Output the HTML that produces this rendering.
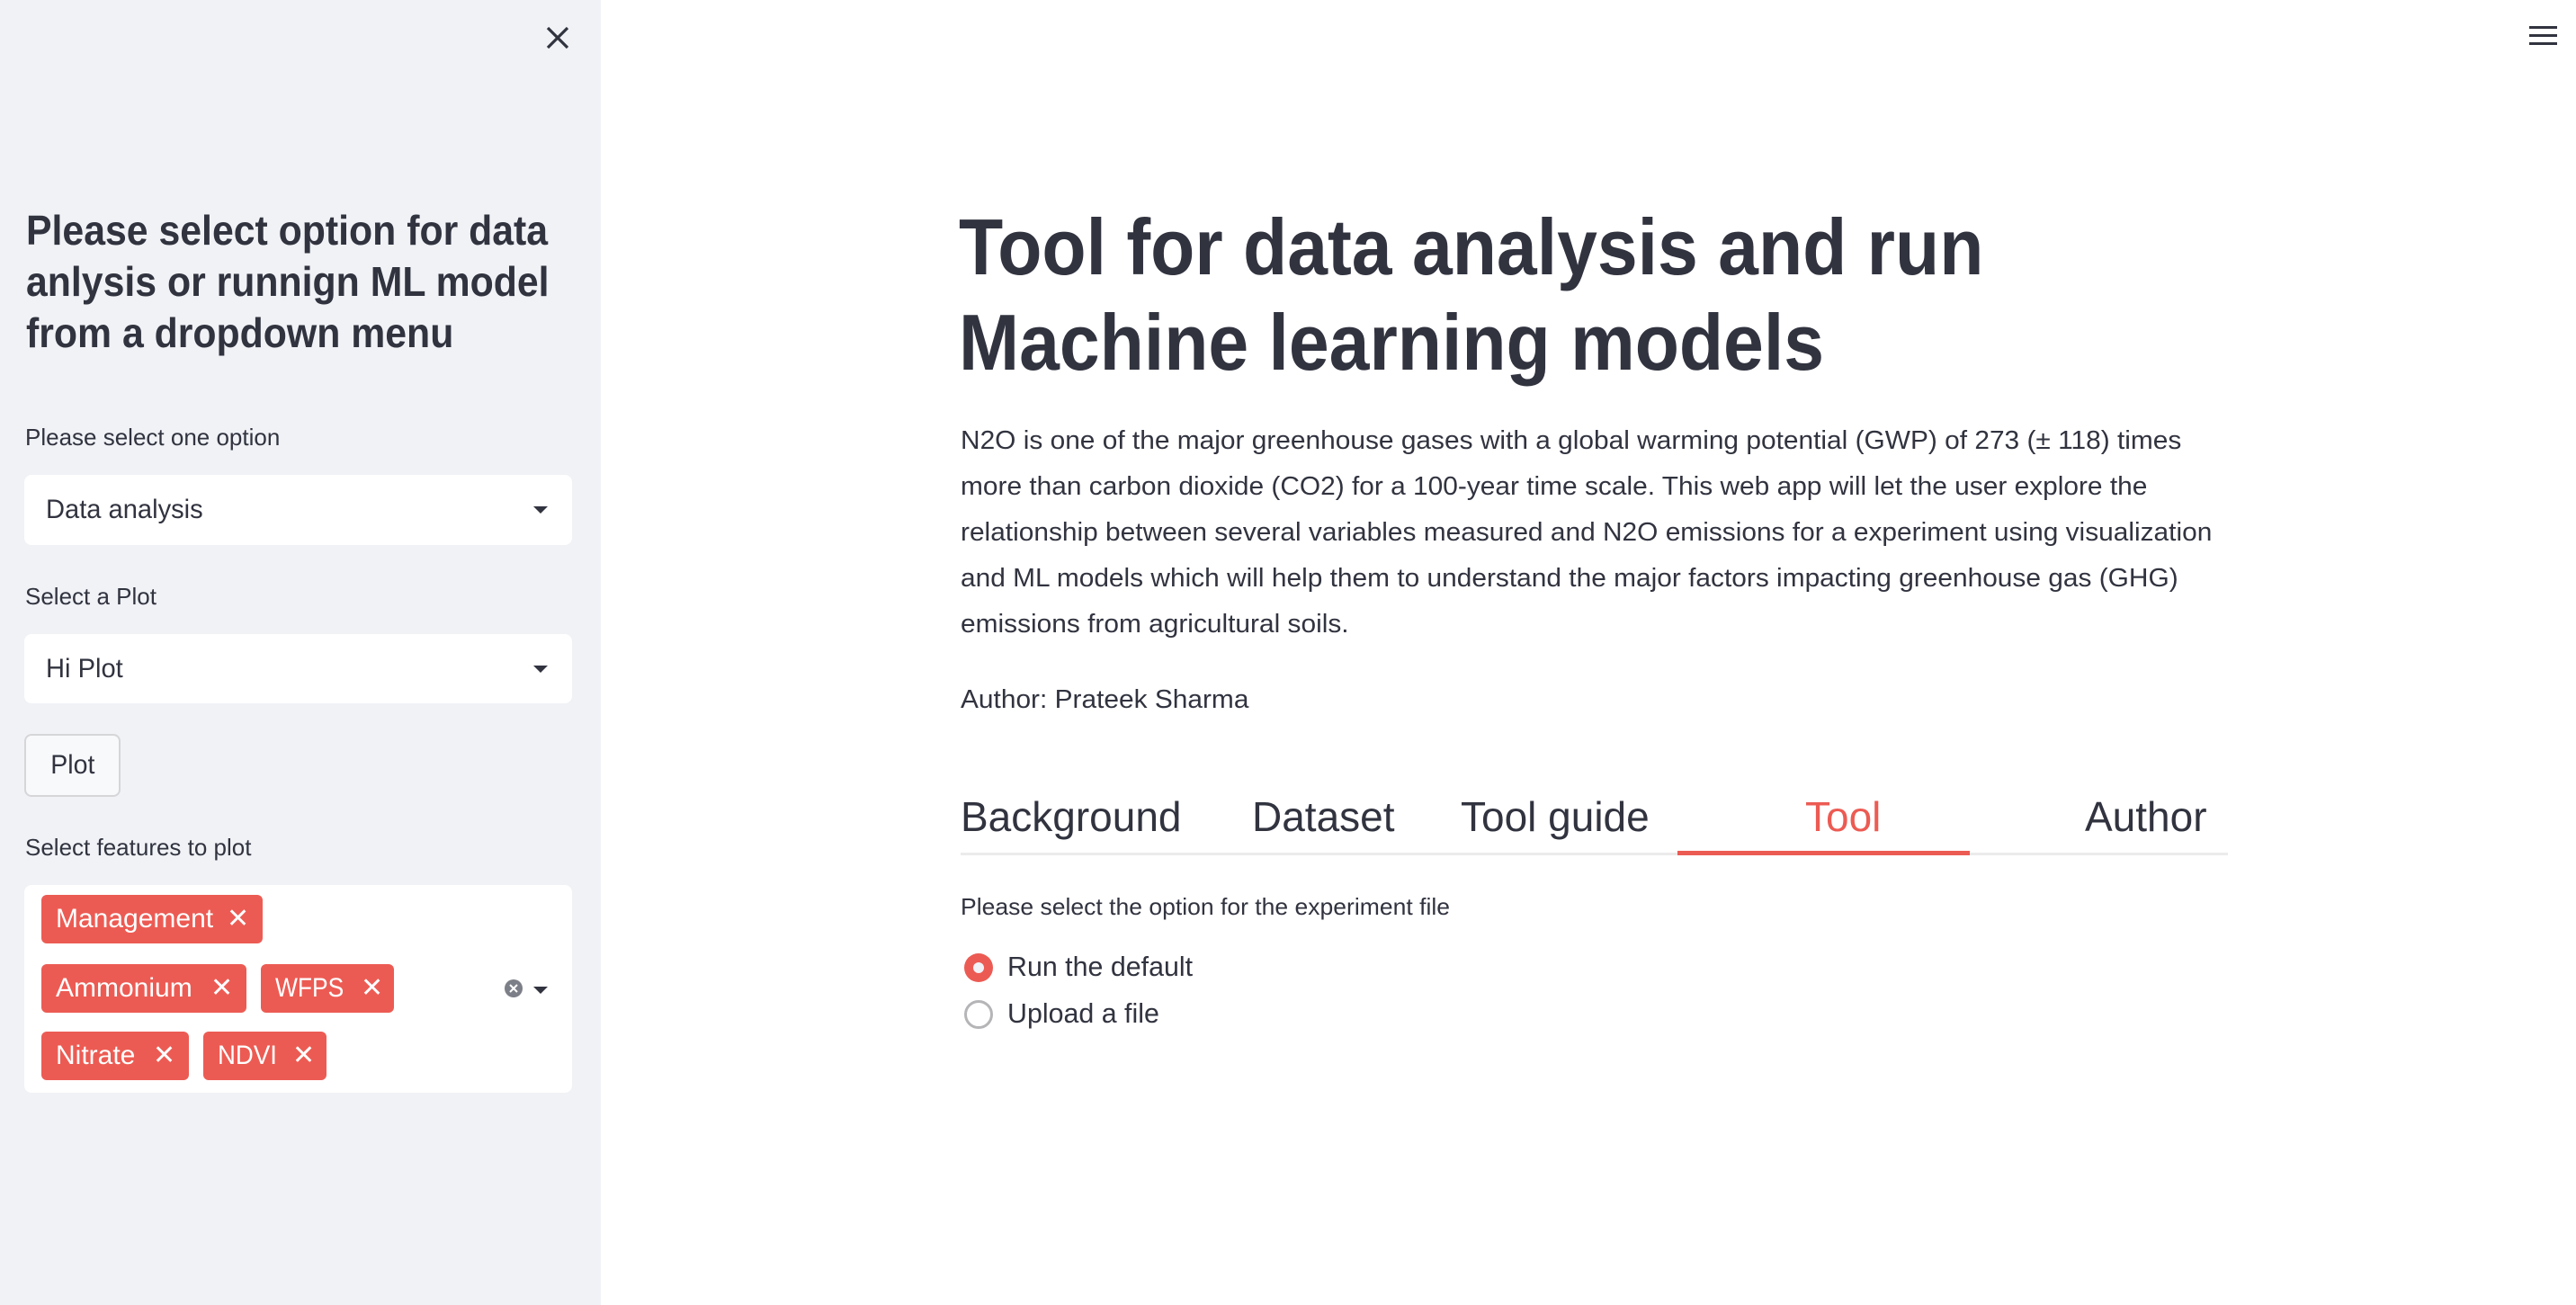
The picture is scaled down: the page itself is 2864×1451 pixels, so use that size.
<!DOCTYPE html>
<html><head><meta charset="utf-8"><style>
*{margin:0;padding:0;box-sizing:border-box}
body{width:2864px;height:1451px;position:relative;background:#fff;font-family:"Liberation Sans",sans-serif;color:#31333f;overflow:hidden}
.a{position:absolute;white-space:nowrap}
.s{display:inline-block;transform-origin:0 50%;white-space:nowrap}
#side{position:absolute;left:0;top:0;width:668px;height:1451px;background:#f0f2f6}
.box{position:absolute;left:27px;width:609px;background:#fff;border-radius:8px}
.caret{position:absolute;width:0;height:0;border-left:8px solid transparent;border-right:8px solid transparent;border-top:8px solid #31333f}
.tag{position:absolute;height:54px;background:#ec5b53;border-radius:6px;color:#fff;font-size:30px;line-height:54px;padding-left:16px}
.tag .x{position:absolute;top:0;font-size:30px}
</style></head><body>
<div id="side">
<svg class="a" style="left:606px;top:28px" width="28" height="28" viewBox="0 0 28 28"><path d="M3 3L25 25M25 3L3 25" stroke="#31333f" stroke-width="3.2"/></svg>

<div class="a" style="left:29px;top:228px;font-size:46px;font-weight:bold;line-height:57px"><span class="s" style="transform:scaleX(.93)">Please select option for data</span><br><span class="s" style="transform:scaleX(.93)">anlysis or runnign ML model</span><br><span class="s" style="transform:scaleX(.93)">from a dropdown menu</span></div>

<div class="a" style="left:28px;top:470px;font-size:26px;line-height:32px"><span class="s">Please select one option</span></div>
<div class="box" style="top:528px;height:78px"><div class="a" style="left:24px;top:22px;font-size:30px;line-height:34px"><span class="s" style="transform:scaleX(.97)">Data analysis</span></div><div class="caret" style="left:566px;top:35px"></div></div>

<div class="a" style="left:28px;top:647px;font-size:26px;line-height:32px"><span class="s">Select a Plot</span></div>
<div class="box" style="top:705px;height:77px"><div class="a" style="left:24px;top:22px;font-size:30px;line-height:34px"><span class="s" style="transform:scaleX(.97)">Hi Plot</span></div><div class="caret" style="left:566px;top:35px"></div></div>

<div class="a" style="left:27px;top:816px;width:107px;height:70px;border:2px solid #d6d6d9;border-radius:8px;background:#f8f9fb;font-size:30px;line-height:66px;text-align:center"><span class="s" style="transform:scaleX(.95);transform-origin:50% 50%">Plot</span></div>

<div class="a" style="left:28px;top:926px;font-size:26px;line-height:32px"><span class="s">Select features to plot</span></div>
<div class="box" style="top:984px;height:231px">
<div class="tag" style="left:19px;top:11px;width:246px"><span class="s">Management</span><span class="x" style="left:206px">✕</span></div>
<div class="tag" style="left:19px;top:88px;width:228px"><span class="s">Ammonium</span><span class="x" style="left:188px">✕</span></div>
<div class="tag" style="left:263px;top:88px;width:148px"><span class="s" style="transform:scaleX(.88)">WFPS</span><span class="x" style="left:111px">✕</span></div>
<div class="tag" style="left:19px;top:163px;width:164px"><span class="s">Nitrate</span><span class="x" style="left:124px">✕</span></div>
<div class="tag" style="left:199px;top:163px;width:137px"><span class="s" style="transform:scaleX(.92)">NDVI</span><span class="x" style="left:99px">✕</span></div>
<svg class="a" style="left:533px;top:104px" width="22" height="22" viewBox="0 0 22 22"><circle cx="11" cy="11" r="10" fill="#7d7f88"/><path d="M7 7L15 15M15 7L7 15" stroke="#fff" stroke-width="2"/></svg>
<div class="caret" style="left:566px;top:113px"></div>
</div>
</div>

<svg class="a" style="left:2812px;top:28px" width="32" height="24"><rect x="0" y="1" width="31" height="3" fill="#31333f"/><rect x="0" y="10" width="31" height="3" fill="#31333f"/><rect x="0" y="19" width="31" height="3" fill="#31333f"/></svg>

<div class="a" style="left:1066px;top:222px;font-size:88px;font-weight:bold;line-height:106px"><span class="s" style="transform:scaleX(.915)">Tool for data analysis and run</span><br><span class="s" style="transform:scaleX(.915)">Machine learning models</span></div>

<div class="a" style="left:1068px;top:465px;font-size:29px;line-height:51px">
<span class="s" style="transform:scaleX(1.03)">N2O is one of the major greenhouse gases with a global warming potential (GWP) of 273 (± 118) times</span><br>
<span class="s" style="transform:scaleX(1.03)">more than carbon dioxide (CO2) for a 100-year time scale. This web app will let the user explore the</span><br>
<span class="s" style="transform:scaleX(1.03)">relationship between several variables measured and N2O emissions for a experiment using visualization</span><br>
<span class="s" style="transform:scaleX(1.03)">and ML models which will help them to understand the major factors impacting greenhouse gas (GHG)</span><br>
<span class="s" style="transform:scaleX(1.03)">emissions from agricultural soils.</span></div>

<div class="a" style="left:1068px;top:760px;font-size:29px;line-height:36px"><span class="s" style="transform:scaleX(1.03)">Author: Prateek Sharma</span></div>

<div class="a" style="left:1068px;top:880px;font-size:46px;line-height:56px"><span class="s">Background</span></div>
<div class="a" style="left:1392px;top:880px;font-size:46px;line-height:56px"><span class="s">Dataset</span></div>
<div class="a" style="left:1624px;top:880px;font-size:46px;line-height:56px"><span class="s">Tool guide</span></div>
<div class="a" style="left:2007px;top:880px;font-size:46px;line-height:56px;color:#ec5b53"><span class="s">Tool</span></div>
<div class="a" style="left:2318px;top:880px;font-size:46px;line-height:56px"><span class="s">Author</span></div>
<div class="a" style="left:1068px;top:948px;width:1409px;height:3px;background:#ebebeb"></div>
<div class="a" style="left:1865px;top:946px;width:325px;height:5px;background:#ec5b53"></div>

<div class="a" style="left:1068px;top:992px;font-size:26px;line-height:32px"><span class="s" style="transform:scaleX(1.02)">Please select the option for the experiment file</span></div>

<svg class="a" style="left:1070px;top:1058px" width="36" height="90"><circle cx="18" cy="18" r="16" fill="#ec5b53"/><circle cx="18" cy="18" r="6" fill="#f0f2f6"/><circle cx="18" cy="70" r="14.5" fill="#fff" stroke="#b5b5b8" stroke-width="3"/></svg>
<div class="a" style="left:1120px;top:1056px;font-size:31px;line-height:38px"><span class="s" style="transform:scaleX(.98)">Run the default</span></div>
<div class="a" style="left:1120px;top:1108px;font-size:31px;line-height:38px"><span class="s" style="transform:scaleX(.98)">Upload a file</span></div>
</body></html>
